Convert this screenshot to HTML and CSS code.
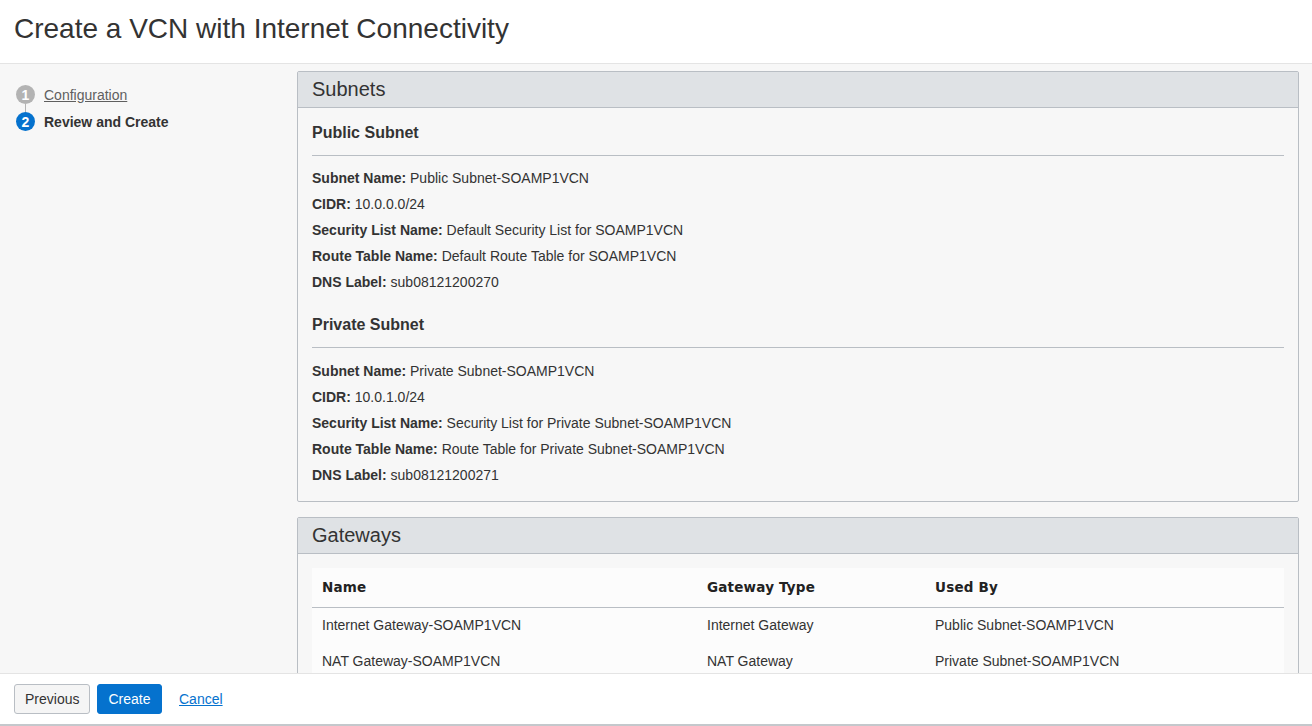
FILE: index.html
```html
<!DOCTYPE html>
<html>
<head>
<meta charset="utf-8">
<title>Create a VCN with Internet Connectivity</title>
<link rel="stylesheet" href="styles.css">
</head>
<body>
<div class="page">
  <header class="top">
    <h1 class="title">Create a VCN with Internet Connectivity</h1>
  </header>
  <div class="middle">
    <nav class="steps">
      <div class="step done">
        <span class="num">1</span>
        <a class="step-link" href="#">Configuration</a>
      </div>
      <div class="connector"></div>
      <div class="step current">
        <span class="num">2</span>
        <span class="step-label">Review and Create</span>
      </div>
    </nav>
    <main class="main">
      <section class="panel">
        <div class="panel-head">Subnets</div>
        <div class="panel-body">
          <h3 class="sub-title">Public Subnet</h3>
          <div class="rows">
            <div class="row"><b>Subnet Name:</b> Public Subnet-SOAMP1VCN</div>
            <div class="row"><b>CIDR:</b> 10.0.0.0/24</div>
            <div class="row"><b>Security List Name:</b> Default Security List for SOAMP1VCN</div>
            <div class="row"><b>Route Table Name:</b> Default Route Table for SOAMP1VCN</div>
            <div class="row"><b>DNS Label:</b> sub08121200270</div>
          </div>
          <h3 class="sub-title gap">Private Subnet</h3>
          <div class="rows last">
            <div class="row"><b>Subnet Name:</b> Private Subnet-SOAMP1VCN</div>
            <div class="row"><b>CIDR:</b> 10.0.1.0/24</div>
            <div class="row"><b>Security List Name:</b> Security List for Private Subnet-SOAMP1VCN</div>
            <div class="row"><b>Route Table Name:</b> Route Table for Private Subnet-SOAMP1VCN</div>
            <div class="row"><b>DNS Label:</b> sub08121200271</div>
          </div>
        </div>
      </section>
      <section class="panel">
        <div class="panel-head">Gateways</div>
        <div class="panel-body table-body">
          <table class="gw">
            <thead>
              <tr><th class="c1">Name</th><th class="c2">Gateway Type</th><th class="c3">Used By</th></tr>
            </thead>
            <tbody>
              <tr><td>Internet Gateway-SOAMP1VCN</td><td>Internet Gateway</td><td>Public Subnet-SOAMP1VCN</td></tr>
              <tr><td>NAT Gateway-SOAMP1VCN</td><td>NAT Gateway</td><td>Private Subnet-SOAMP1VCN</td></tr>
            </tbody>
          </table>
        </div>
      </section>
    </main>
  </div>
  <footer class="footer">
    <button class="btn secondary">Previous</button>
    <button class="btn primary">Create</button>
    <a class="cancel" href="#">Cancel</a>
  </footer>
</div>
</body>
</html>
```
FILE: styles.css
```css
* { box-sizing: border-box; }
html, body { margin: 0; padding: 0; }
body {
  font-family: "Liberation Sans", Arial, Helvetica, sans-serif;
  color: #333;
  background: #f7f7f7;
  overflow: hidden;
}
.page {
  height: 726px;
  display: flex;
  flex-direction: column;
}
.top {
  height: 64px;
  flex: 0 0 64px;
  background: #fff;
  border-bottom: 1px solid #e4e4e4;
  display: flex;
  align-items: center;
  padding-left: 14px;
}
.title {
  margin: 0;
  font-size: 28px;
  font-weight: normal;
  color: #333;
  padding-bottom: 6px;
}
.middle {
  flex: 1 1 auto;
  display: flex;
  overflow: hidden;
  min-height: 0;
}
.steps {
  width: 297px;
  flex: 0 0 297px;
  padding: 21px 0 0 16px;
}
.step {
  display: flex;
  align-items: center;
  height: 19px;
  font-size: 14px;
}
.num {
  width: 19px;
  height: 19px;
  border-radius: 50%;
  color: #fff;
  font-size: 14px;
  font-weight: bold;
  display: flex;
  align-items: center;
  justify-content: center;
  margin-right: 9px;
  flex: 0 0 19px;
}
.done .num { background: #b3b3b3; }
.current .num { background: #0572ce; }
.step-link {
  color: #5f5f5f;
  text-decoration: underline;
}
.step-label {
  font-weight: bold;
  color: #333;
}
.connector {
  width: 1px;
  height: 8px;
  background: #b3b3b3;
  margin-left: 9px;
}
.main {
  flex: 1 1 auto;
  padding: 7px 13px 0 0;
  overflow: hidden;
}
.panel {
  border: 1px solid #b9bec4;
  border-radius: 2px;
  background: #f7f7f7;
  margin-bottom: 15px;
}
.panel-head {
  height: 36px;
  background: #dfe2e5;
  border-bottom: 1px solid #b9bec4;
  font-size: 20px;
  line-height: 34px;
  padding-left: 14px;
  color: #333;
}
.panel-body {
  padding: 15px 14px 13px 14px;
}
.sub-title {
  margin: 0;
  font-size: 16px;
  line-height: 20px;
  font-weight: bold;
  padding-bottom: 12px;
  border-bottom: 1px solid #b9bec4;
  color: #333;
}
.sub-title.gap { margin-top: 20px; }
.rows { padding-top: 9px; }
.rows.last { padding-top: 10px; }
.row {
  font-size: 14px;
  line-height: 26px;
  color: #333;
}
.row b { font-weight: bold; }
.table-body { padding-top: 14px; padding-bottom: 0; }
.gw {
  width: 100%;
  border-collapse: collapse;
  background: #fcfcfc;
  font-size: 14px;
}
.gw th {
  text-align: left;
  font-family: "DejaVu Sans", "Liberation Sans", sans-serif;
  font-size: 13.5px;
  letter-spacing: 0.2px;
  font-weight: bold;
  height: 39px;
  padding: 0 10px;
  border-bottom: 1px solid #b9bec4;
  color: #222;
}
.gw td {
  height: 36px;
  padding: 0 10px;
  color: #333;
}
.gw .c1 { width: 385px; }
.gw .c2 { width: 228px; }
.footer {
  flex: 0 0 53px;
  height: 53px;
  background: #fff;
  border-top: 1px solid #e4e4e4;
  border-bottom: 2px solid #c4c8cc;
  display: flex;
  align-items: center;
  padding: 0 0 1px 14px;
}
.btn {
  font-family: "Liberation Sans", Arial, Helvetica, sans-serif;
  font-size: 14px;
  height: 30px;
  border-radius: 3px;
  padding: 0 10px;
  cursor: pointer;
  margin-right: 7px;
}
.secondary {
  background: #f5f5f5;
  border: 1px solid #b9bec4;
  color: #333;
  width: 76px;
}
.primary {
  background: #0572ce;
  border: 1px solid #0572ce;
  color: #fff;
  width: 65px;
  margin-right: 17px;
}
.cancel {
  font-size: 14px;
  color: #0572ce;
  text-decoration: underline;
}
```
